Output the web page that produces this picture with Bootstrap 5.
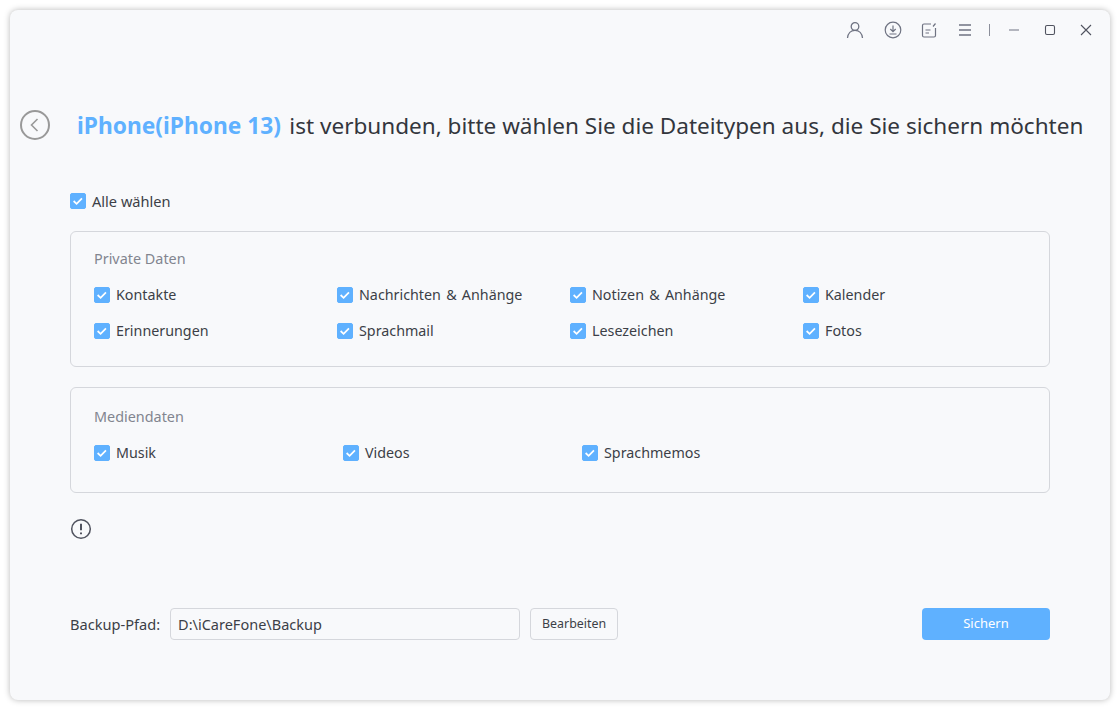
<!DOCTYPE html>
<html lang="de">
<head>
<meta charset="utf-8">
<title>iCareFone</title>
<link rel="stylesheet" href="https://cdn.jsdelivr.net/npm/bootstrap@5.3.0/dist/css/bootstrap.min.css">
<style>
html,body{height:100%;}
body{background:#fff;font-family:"Noto Sans","Liberation Sans",sans-serif;color:#3c3f47;font-size:14px;overflow:hidden;}
.shell{padding:10px;height:710px;}
.app-window{height:690px;width:1100px;background:#f8f9fb;border-radius:8px;box-shadow:0 0 6px rgba(0,0,0,.28);}
.titlebar{height:40px;padding:10px 6px 0 0;color:#6f7382;}
.titlebar svg{display:block;}
.tb-btn{width:36px;height:20px;display:flex;align-items:center;justify-content:center;}
.tb-user{margin-right:2px;margin-left:-2px;}
.tb-sep{width:1px;height:12px;background:#8b8e9a;margin:4px 6px 0 6px;}
.head{height:44px;margin-top:53px;padding-left:10px;}
.back{width:30px;height:30px;flex:none;color:#999;}
.head h1{font-size:22.56px;font-weight:400;margin:2px 0 0 27px;color:#33363d;white-space:nowrap;line-height:44px;}
.head h1 b{color:#5fb1ff;font-weight:700;font-size:22.75px;margin-right:2.5px;}
.body-area{padding:0 60px;}
.check{display:flex;align-items:center;gap:6px;font-size:14.3px;word-spacing:1.5px;line-height:16px;color:#3c3f47;white-space:nowrap;}
.check .form-check-input{width:16px;height:16px;margin:0;flex:none;background-color:#5fb1ff;border-color:#5fb1ff;border-radius:2px;background-size:100%;background-image:url("data:image/svg+xml,%3csvg xmlns='http://www.w3.org/2000/svg' viewBox='0 0 16 16'%3e%3cpath fill='none' stroke='%23fff' stroke-width='2' d='M3 8l3.400 3.200L12.500 5'/%3e%3c/svg%3e");}
.all{margin-top:46px;height:16px;font-size:14.6px;word-spacing:0;}
.group{border:1px solid #d5d7dc;border-radius:6px;background:transparent;padding:16px 23px 0;}
.group h2{font-size:14.4px;font-weight:400;color:#82858f;margin:0;line-height:22px;}
.g-private{height:136px;margin-top:22px;}
.g-media{height:106px;margin-top:20px;padding-top:18px;}
.rows{margin-top:17px;row-gap:20px;}
.grid-private{display:grid;grid-template-columns:243px 233px 233px 1fr;}
.grid-media{display:grid;grid-template-columns:249px 239px 1fr;}
.warn{margin-top:25px;height:22px;color:#50535f;}
.warn svg{display:block;}
.foot{margin-top:68px;height:32px;}
.foot label{font-size:14.6px;color:#3c3f47;margin-right:10px;padding-top:1px;white-space:nowrap;}
.path{width:350px;height:32px;font-size:14.5px;padding:0 7px;border:1px solid #d5d7dc;border-radius:4px;background:transparent;color:#3c3f47;}
.edit{height:32px;width:88px;margin-left:10px;padding:1px 0 0;font-size:12.4px;color:#3c3f47;border:1px solid #d5d7dc;border-radius:4px;background:transparent;}
.save{height:32px;width:128px;padding:0;font-size:13px;color:#fff;background:#5fb1ff;border:0;border-radius:4px;}
</style>
</head>
<body>
<div class="shell">
<div class="app-window d-flex flex-column">
  <div class="titlebar d-flex justify-content-end align-items-start">
    <span class="tb-btn tb-user"><svg width="18" height="18" viewBox="0 0 18 18" fill="none" stroke="currentColor" stroke-width="1.300"><circle cx="9" cy="5.500" r="3.800"/><path d="M1.500 17c.4-4.600 3.400-7.700 7.500-7.700s7.100 3.100 7.500 7.700"/></svg></span>
    <span class="tb-btn"><svg width="18" height="18" viewBox="0 0 18 18" fill="none" stroke="currentColor" stroke-width="1.200"><circle cx="9" cy="9" r="7.800"/><path d="M9 4.500v6M6.300 8l2.700 2.700L11.700 8M5.500 13h7"/></svg></span>
    <span class="tb-btn"><svg width="16" height="16" viewBox="0 0 16 16" fill="none" stroke="currentColor" stroke-width="1.200"><path d="M10 2H3a1.500 1.500 0 0 0-1.500 1.500v10A1.500 1.500 0 0 0 3 15h10a1.500 1.500 0 0 0 1.500-1.500V6"/><path d="M12 4.500l2.500-3M4.500 8h5M4.500 11h3.500"/></svg></span>
    <span class="tb-btn"><svg width="14" height="14" viewBox="0 0 14 14" fill="none" stroke="currentColor" stroke-width="1.300"><path d="M1 2h12M1 7h12M1 12h12"/></svg></span>
    <span class="tb-sep"></span>
    <span class="tb-btn"><svg width="12" height="12" viewBox="0 0 12 12" fill="none" stroke="currentColor" stroke-width="1"><path d="M1 6h10"/></svg></span>
    <span class="tb-btn"><svg width="12" height="12" viewBox="0 0 12 12" fill="none" stroke="#50535f" stroke-width="1.100"><rect x="1.500" y="1.500" width="9" height="9" rx="1.500"/></svg></span>
    <span class="tb-btn"><svg width="12" height="12" viewBox="0 0 12 12" fill="none" stroke="#50535f" stroke-width="1.100"><path d="M1 1l10 10M11 1L1 11"/></svg></span>
  </div>

  <div class="head d-flex align-items-center">
    <svg class="back" viewBox="0 0 30 30" fill="none" stroke="currentColor" stroke-width="2"><circle cx="15" cy="15" r="14"/><path d="M17.500 9l-6 6 6 6" stroke-width="1.600"/></svg>
    <h1><b>iPhone(iPhone 13)</b> ist verbunden, bitte wählen Sie die Dateitypen aus, die Sie sichern möchten</h1>
  </div>

  <div class="body-area">
    <div class="check all"><input class="form-check-input" type="checkbox" checked aria-label="Alle wählen"><span>Alle wählen</span></div>

    <section class="group g-private">
      <h2>Private Daten</h2>
      <div class="rows grid-private">
        <div class="check"><input class="form-check-input" type="checkbox" checked aria-label="Kontakte"><span>Kontakte</span></div>
        <div class="check"><input class="form-check-input" type="checkbox" checked aria-label="Nachrichten"><span>Nachrichten &amp; Anhänge</span></div>
        <div class="check"><input class="form-check-input" type="checkbox" checked aria-label="Notizen"><span>Notizen &amp; Anhänge</span></div>
        <div class="check"><input class="form-check-input" type="checkbox" checked aria-label="Kalender"><span>Kalender</span></div>
        <div class="check"><input class="form-check-input" type="checkbox" checked aria-label="Erinnerungen"><span>Erinnerungen</span></div>
        <div class="check"><input class="form-check-input" type="checkbox" checked aria-label="Sprachmail"><span>Sprachmail</span></div>
        <div class="check"><input class="form-check-input" type="checkbox" checked aria-label="Lesezeichen"><span>Lesezeichen</span></div>
        <div class="check"><input class="form-check-input" type="checkbox" checked aria-label="Fotos"><span>Fotos</span></div>
      </div>
    </section>

    <section class="group g-media">
      <h2>Mediendaten</h2>
      <div class="rows grid-media">
        <div class="check"><input class="form-check-input" type="checkbox" checked aria-label="Musik"><span>Musik</span></div>
        <div class="check"><input class="form-check-input" type="checkbox" checked aria-label="Videos"><span>Videos</span></div>
        <div class="check"><input class="form-check-input" type="checkbox" checked aria-label="Sprachmemos"><span>Sprachmemos</span></div>
      </div>
    </section>

    <div class="warn"><svg width="22" height="22" viewBox="0 0 22 22" fill="none" stroke="currentColor" stroke-width="1.500"><circle cx="11" cy="11" r="9.300"/><path d="M11 5.800v6.400M11 14.500v1.700" stroke-width="2"/></svg></div>

    <div class="foot d-flex align-items-center">
      <label for="p">Backup-Pfad:</label>
      <input id="p" class="form-control path" type="text" value="D:\iCareFone\Backup">
      <button class="btn edit" type="button">Bearbeiten</button>
      <button class="btn save ms-auto" type="button">Sichern</button>
    </div>
  </div>
</div>
</div>
<script src="https://cdn.jsdelivr.net/npm/bootstrap@5.3.0/dist/js/bootstrap.bundle.min.js"></script>
</body>
</html>
